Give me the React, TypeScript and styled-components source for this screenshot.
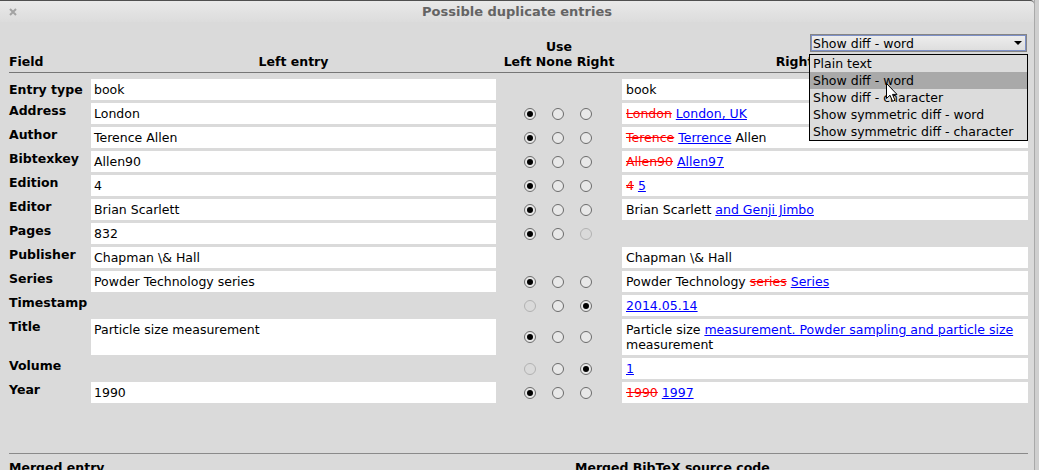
import React from 'react';
import styled, { createGlobalStyle, css } from 'styled-components';

const GlobalStyle = createGlobalStyle`
  html, body { margin: 0; padding: 0; background: #cfcfcf; }
  body { font-family: "DejaVu Sans", sans-serif; }
  #root { width: 1039px; height: 470px; overflow: hidden; }
`;

const columns = css`
  display: grid;
  grid-template-columns: 82px 405px 126px 406px;
`;

const Window = styled.div`
  width: 1035px;
  height: 470px;
  box-sizing: border-box;
  border-right: 1px solid #a9a9a9;
  background: #dadada;
  display: flex;
  flex-direction: column;
  overflow: hidden;
  font-family: "DejaVu Sans", sans-serif;
  font-size: 12.5px;
  line-height: 15px;
  color: #000;
`;

const TitleBar = styled.div`
  height: 22px;
  flex: none;
  box-sizing: border-box;
  border-top: 1px solid #4f4f4f;
  border-top-right-radius: 4px;
  background: linear-gradient(#e9e9e9, #dcdcdc);
  display: grid;
  grid-template-columns: 80px 1fr 80px;
  align-items: center;
`;

const CloseButton = styled.span`
  padding-left: 9px;
  display: flex;
  align-items: center;
`;

const Title = styled.span`
  text-align: center;
  font-weight: bold;
  font-size: 13px;
  color: #646464;
`;

const Content = styled.div`
  padding: 12px 6px 0 9px;
  display: flex;
  flex-direction: column;
`;

const Header = styled.div`
  ${columns};
  grid-template-rows: 20px 15px;
  padding-bottom: 3px;
  border-bottom: 1px solid #767676;
  font-weight: bold;
  position: relative;
`;

const HeaderCell = styled.div<{ $col: number; $row: number; $align?: string; $shift?: number }>`
  grid-column: ${p => p.$col};
  grid-row: ${p => p.$row};
  text-align: ${p => p.$align || 'left'};
  align-self: end;
  white-space: nowrap;
  padding-right: ${p => p.$shift || 0}px;
`;

const DropdownWrap = styled.div`
  grid-column: 4;
  grid-row: 1;
  justify-self: end;
  align-self: start;
  margin-right: 1px;
  position: relative;
  z-index: 3;
  font-weight: normal;
`;

const Select = styled.div`
  width: 217px;
  height: 18px;
  box-sizing: border-box;
  border: 1px solid #858585;
  box-shadow: inset 0 0 0 1px #7d90c8;
  background: linear-gradient(#eeeeee, #dddddd);
  display: flex;
  align-items: center;
  justify-content: space-between;
  padding: 0 4px 0 2px;
`;

const Arrow = styled.span`
  width: 0;
  height: 0;
  border-left: 4px solid transparent;
  border-right: 4px solid transparent;
  border-top: 4px solid #000;
`;

const List = styled.div`
  position: absolute;
  top: 20px;
  left: -1px;
  width: 219px;
  box-sizing: border-box;
  border: 1px solid #000;
  background: #dcdcdc;
`;

const ListItem = styled.div<{ $selected?: boolean }>`
  height: 17px;
  line-height: 17px;
  padding-left: 3px;
  white-space: nowrap;
  background: ${p => (p.$selected ? '#a9a9a9' : 'transparent')};
`;

const Cursor = styled.svg`
  position: absolute;
  left: 76px;
  top: 28px;
`;

const Rows = styled.div`
  ${columns};
  row-gap: 3px;
  margin-top: 6px;
`;

const FieldLabel = styled.div<{ $center?: boolean }>`
  font-weight: bold;
  white-space: nowrap;
  align-self: ${p => (p.$center ? 'center' : 'start')};
`;

const ValueBox = styled.div<{ $side?: 'left' | 'right' }>`
  background: #fff;
  padding: 3px 3px 3px ${p => (p.$side === 'right' ? 4 : 3)}px;
  min-height: 15px;
  white-space: pre-wrap;
`;

const Empty = styled.div``;

const RadioGroup = styled.div`
  display: flex;
  align-items: center;
  padding-left: 28px;
  gap: 16px;
`;

const Radio = styled.span<{ $checked?: boolean; $disabled?: boolean }>`
  width: 12px;
  height: 12px;
  box-sizing: border-box;
  border-radius: 50%;
  border: 1px solid ${p => (p.$disabled ? '#b2b2b2' : '#6b6b6b')};
  background: ${p => (p.$disabled ? '#dadada' : '#e8e8e8')};
  display: flex;
  align-items: center;
  justify-content: center;
  &::after {
    content: '';
    width: 6px;
    height: 6px;
    border-radius: 50%;
    background: #000;
    display: ${p => (p.$checked ? 'block' : 'none')};
  }
`;

const Del = styled.span`
  color: #ff0000;
  text-decoration: line-through;
`;

const Ins = styled.span`
  color: #0000ff;
  text-decoration: underline;
`;

const Footer = styled.div`
  display: grid;
  grid-template-columns: 566px 1fr;
  margin-top: 50px;
  border-top: 1px solid #8a8a8a;
  padding-top: 6px;
  font-weight: bold;
`;

type RadioState = 'on' | 'off' | 'dis';

interface Row {
  label: string;
  left?: string;
  right?: React.ReactNode;
  radios?: [RadioState, RadioState, RadioState];
  center?: boolean;
}

const std: [RadioState, RadioState, RadioState] = ['on', 'off', 'off'];

const rows: Row[] = [
  { label: 'Entry type', left: 'book', right: 'book', center: true },
  { label: 'Address', left: 'London', right: <><Del>London</Del> <Ins>London, UK</Ins></>, radios: std },
  { label: 'Author', left: 'Terence Allen', right: <><Del>Terence</Del> <Ins>Terrence</Ins> Allen</>, radios: std },
  { label: 'Bibtexkey', left: 'Allen90', right: <><Del>Allen90</Del> <Ins>Allen97</Ins></>, radios: std },
  { label: 'Edition', left: '4', right: <><Del>4</Del> <Ins>5</Ins></>, radios: std },
  { label: 'Editor', left: 'Brian Scarlett', right: <>Brian Scarlett <Ins>and Genji Jimbo</Ins></>, radios: std },
  { label: 'Pages', left: '832', radios: ['on', 'off', 'dis'] },
  { label: 'Publisher', left: 'Chapman \\& Hall', right: 'Chapman \\& Hall' },
  { label: 'Series', left: 'Powder Technology series', right: <>Powder Technology <Del>series</Del> <Ins>Series</Ins></>, radios: std },
  { label: 'Timestamp', right: <Ins>2014.05.14</Ins>, radios: ['dis', 'off', 'on'] },
  {
    label: 'Title',
    left: 'Particle size measurement',
    right: <>Particle size <Ins>measurement. Powder sampling and particle size</Ins> measurement</>,
    radios: std,
  },
  { label: 'Volume', right: <Ins>1</Ins>, radios: ['dis', 'off', 'on'] },
  { label: 'Year', left: '1990', right: <><Del>1990</Del> <Ins>1997</Ins></>, radios: std },
];

const modes = [
  'Plain text',
  'Show diff - word',
  'Show diff - character',
  'Show symmetric diff - word',
  'Show symmetric diff - character',
];

export default function App() {
  return (
    <>
      <GlobalStyle />
      <Window>
        <TitleBar>
          <CloseButton>
            <svg width="8" height="8" viewBox="0 0 8 8">
              <path d="M1 1 L7 7 M7 1 L1 7" stroke="#a3a3a3" strokeWidth="2" />
            </svg>
          </CloseButton>
          <Title>Possible duplicate entries</Title>
          <span />
        </TitleBar>
        <Content>
          <Header>
            <HeaderCell $col={3} $row={1} $align="center">Use</HeaderCell>
            <DropdownWrap>
              <Select>
                <span>Show diff - word</span>
                <Arrow />
              </Select>
              <List>
                {modes.map(m => (
                  <ListItem key={m} $selected={m === 'Show diff - word'}>{m}</ListItem>
                ))}
                <Cursor width="13" height="20" viewBox="0 0 13 20">
                  <path
                    d="M0.5 0.5 L0.5 15.5 L4 12.2 L6.6 18.3 L9 17.3 L6.5 11.4 L11 11.4 Z"
                    fill="#ffffff"
                    stroke="#000000"
                    strokeWidth="1"
                    strokeLinejoin="round"
                  />
                </Cursor>
              </List>
            </DropdownWrap>
            <HeaderCell $col={1} $row={2}>Field</HeaderCell>
            <HeaderCell $col={2} $row={2} $align="center">Left entry</HeaderCell>
            <HeaderCell $col={3} $row={2} $align="center">Left None Right</HeaderCell>
            <HeaderCell $col={4} $row={2} $align="center" $shift={19}>Right entry</HeaderCell>
          </Header>
          <Rows>
            {rows.map(r => (
              <React.Fragment key={r.label}>
                <FieldLabel $center={r.center}>{r.label}</FieldLabel>
                {r.left !== undefined ? <ValueBox $side="left">{r.left}</ValueBox> : <Empty />}
                {r.radios ? (
                  <RadioGroup>
                    {r.radios.map((s, i) => (
                      <Radio key={i} $checked={s === 'on'} $disabled={s === 'dis'} />
                    ))}
                  </RadioGroup>
                ) : (
                  <Empty />
                )}
                {r.right !== undefined ? <ValueBox $side="right">{r.right}</ValueBox> : <Empty />}
              </React.Fragment>
            ))}
          </Rows>
          <Footer>
            <span>Merged entry</span>
            <span>Merged BibTeX source code</span>
          </Footer>
        </Content>
      </Window>
    </>
  );
}
